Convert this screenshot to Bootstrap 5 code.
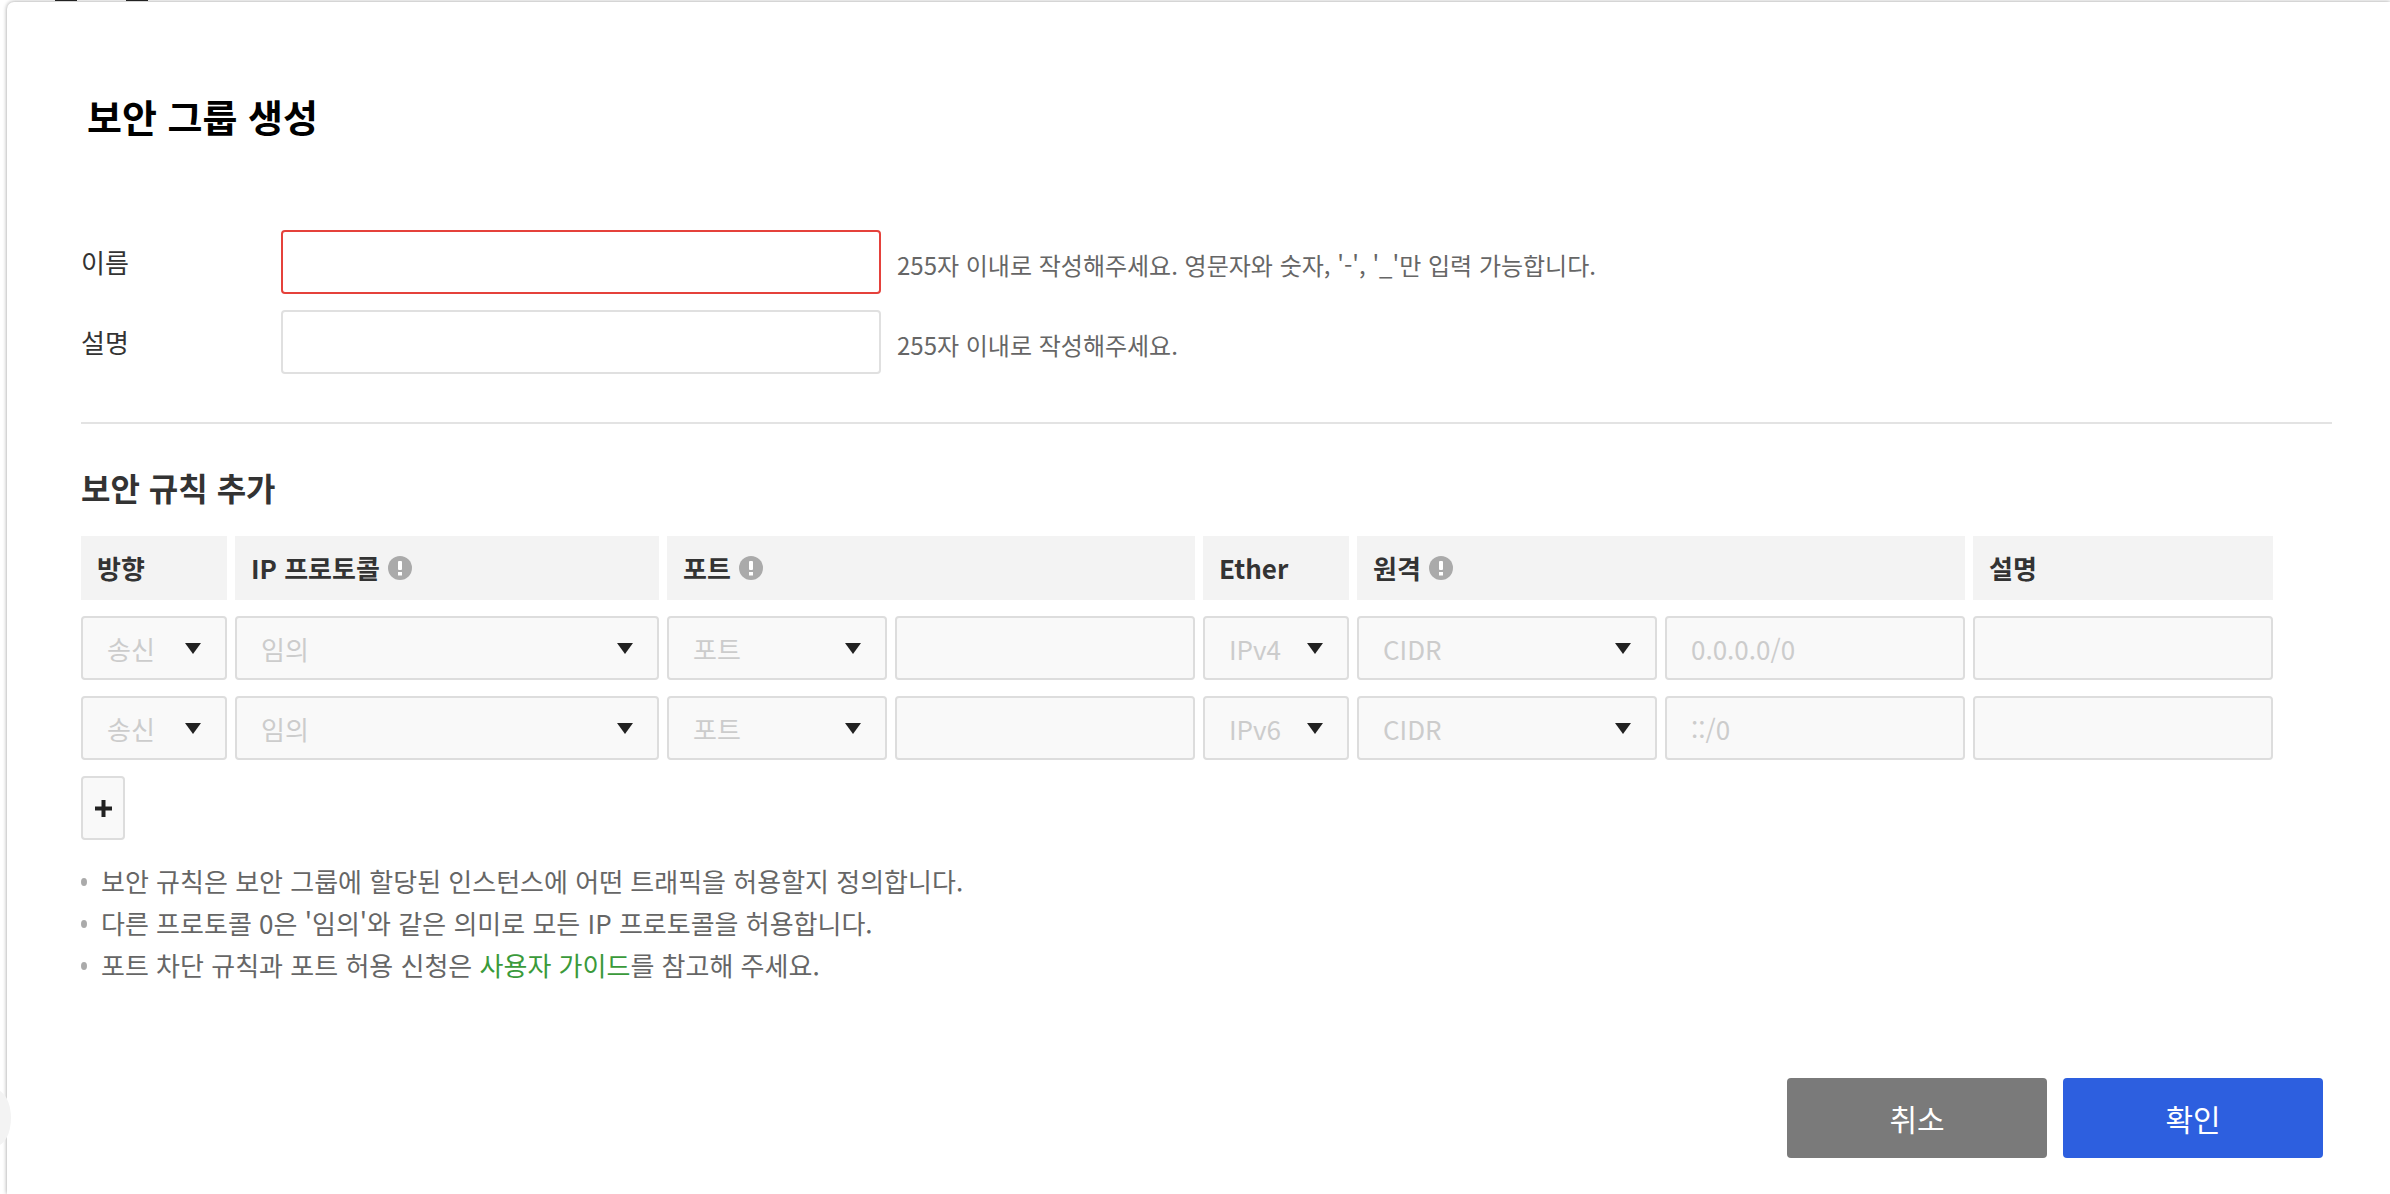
<!doctype html>
<html lang="ko">
<head>
<meta charset="utf-8">
<title>보안 그룹 생성</title>
<link href="https://cdn.jsdelivr.net/npm/bootstrap@5.3.0/dist/css/bootstrap.min.css" rel="stylesheet">
<style>
html,body{height:100%;overflow:hidden;background:#fff}
body{font-family:"Noto Sans CJK KR","Noto Sans",sans-serif;color:#333;position:relative}
.sheet{position:absolute;left:7px;top:2px;right:0;height:1192px;background:#fff;border-radius:7px 0 0 0;box-shadow:0 0 4px rgba(0,0,0,.4);padding:87px 58px 0 74px}
.notch{position:absolute;left:-26px;top:1088px;width:30px;height:56px;border-radius:50%;background:#f3f3f3}
.ttl{font-size:38px;font-weight:700;color:#000;margin:0;padding:0 0 0 6px;line-height:54px;height:52px}
.frm{padding-top:89px}
.frow{display:flex;align-items:center;height:64px;margin-bottom:16px}
.flabel{width:200px;font-size:26px;line-height:36px;color:#333;margin:0}
.finput{width:600px;height:64px;border:2px solid #e0e0e0;border-radius:4px;box-shadow:none}
.finput.bad{border-color:#e5413b}
.fhint{font-size:24px;color:#666;margin:6px 0 0 16px;line-height:36px}
.rule{border:0;border-top:2px solid #e3e3e3;opacity:1;margin:48px 0 0;width:2251px}
.subttl{font-size:32px;font-weight:700;color:#333;line-height:44px;margin:41px 0 27px}
.rgrid{display:grid;grid-template-columns:146px 424px 220px 300px 146px 300px 300px 300px;gap:16px 8px;width:2192px}
.hcell{background:#f3f3f3;height:64px;display:flex;align-items:center;gap:8px;padding:0 16px 2px;font-size:26px;font-weight:700;color:#333}
.hcell svg{flex:none;margin-top:2px}
.s2{grid-column:span 2}
.fld{height:64px;border:2px solid #ddd;border-radius:4px;background-color:#f9f9f9;color:#ccc;font-size:26px;padding:0 24px;box-shadow:none;opacity:1;font-family:inherit}
.fld:disabled{background-color:#f9f9f9;color:#ccc;opacity:1}
.fld::placeholder{color:#ccc;opacity:1}
.sel{--bs-form-select-bg-img:url("data:image/svg+xml,%3csvg xmlns='http://www.w3.org/2000/svg' viewBox='0 0 16 11'%3e%3cpath fill='%23222' d='M0 0h16L8 11z'/%3e%3c/svg%3e");background-position:right 24px center;background-size:16px 11px}
.addbtn{width:44px;height:64px;border:2px solid #ddd;border-radius:4px;background:#f9f9f9;color:#222;padding:0;margin-top:16px;display:flex;align-items:center;justify-content:center}
.notes{list-style:none;margin:20px 0 0;padding:0;font-size:26px;line-height:42px;color:#666}
.notes li{position:relative;padding-left:20px}
.notes li::before{content:"";position:absolute;left:0;top:18px;width:6px;height:8px;border-radius:50%;background:#aaa}
.notes a{color:#3a9a3a;text-decoration:none}
.acts{position:absolute;left:1780px;top:1076px;display:flex;gap:16px}
.bigbtn{width:260px;height:80px;border:0;border-radius:4px;color:#fff;font-size:30px;padding:0}
.bcancel,.bcancel:hover{background:#7a7a7a;color:#fff}
.bok,.bok:hover{background:#2d5fdf;color:#fff}
.scrap{position:absolute;top:0;height:1px;background:#222;z-index:2}
</style>
</head>
<body>
<div class="scrap" style="left:55px;width:22px"></div>
<div class="scrap" style="left:126px;width:22px"></div>
<div class="sheet">
  <div class="notch"></div>
  <h2 class="ttl">보안 그룹 생성</h2>
  <form class="frm">
    <div class="frow">
      <label class="flabel" for="nm">이름</label>
      <input id="nm" class="form-control finput bad" type="text">
      <span class="fhint">255자 이내로 작성해주세요. 영문자와 숫자, '-', '_'만 입력 가능합니다.</span>
    </div>
    <div class="frow mb-0">
      <label class="flabel" for="ds">설명</label>
      <input id="ds" class="form-control finput" type="text">
      <span class="fhint">255자 이내로 작성해주세요.</span>
    </div>
    <hr class="rule">
    <h3 class="subttl">보안 규칙 추가</h3>
    <div class="rgrid">
      <div class="hcell">방향</div>
      <div class="hcell">IP 프로토콜 <svg width="24" height="24" viewBox="0 0 24 24"><circle cx="12" cy="12" r="12" fill="#aaa"/><rect x="10" y="5" width="4" height="9" rx="1" fill="#fff"/><rect x="10" y="16" width="4" height="3.500" fill="#fff"/></svg></div>
      <div class="hcell s2">포트 <svg width="24" height="24" viewBox="0 0 24 24"><circle cx="12" cy="12" r="12" fill="#aaa"/><rect x="10" y="5" width="4" height="9" rx="1" fill="#fff"/><rect x="10" y="16" width="4" height="3.500" fill="#fff"/></svg></div>
      <div class="hcell">Ether</div>
      <div class="hcell s2">원격 <svg width="24" height="24" viewBox="0 0 24 24"><circle cx="12" cy="12" r="12" fill="#aaa"/><rect x="10" y="5" width="4" height="9" rx="1" fill="#fff"/><rect x="10" y="16" width="4" height="3.500" fill="#fff"/></svg></div>
      <div class="hcell">설명</div>

      <select class="form-select fld sel" disabled><option>송신</option></select>
      <select class="form-select fld sel" disabled><option>임의</option></select>
      <select class="form-select fld sel" disabled><option>포트</option></select>
      <input class="form-control fld" disabled>
      <select class="form-select fld sel" disabled><option>IPv4</option></select>
      <select class="form-select fld sel" disabled><option>CIDR</option></select>
      <input class="form-control fld" disabled placeholder="0.0.0.0/0">
      <input class="form-control fld" disabled>

      <select class="form-select fld sel" disabled><option>송신</option></select>
      <select class="form-select fld sel" disabled><option>임의</option></select>
      <select class="form-select fld sel" disabled><option>포트</option></select>
      <input class="form-control fld" disabled>
      <select class="form-select fld sel" disabled><option>IPv6</option></select>
      <select class="form-select fld sel" disabled><option>CIDR</option></select>
      <input class="form-control fld" disabled placeholder="::/0">
      <input class="form-control fld" disabled>
    </div>
    <button type="button" class="btn addbtn" aria-label="추가"><svg width="17" height="17" viewBox="0 0 17 17"><path fill="#222" d="M6.500 0h4v6.500H17v4h-6.500V17h-4v-6.500H0v-4h6.500z"/></svg></button>
    <ul class="notes">
      <li>보안 규칙은 보안 그룹에 할당된 인스턴스에 어떤 트래픽을 허용할지 정의합니다.</li>
      <li>다른 프로토콜 0은 '임의'와 같은 의미로 모든 IP 프로토콜을 허용합니다.</li>
      <li>포트 차단 규칙과 포트 허용 신청은 <a href="#">사용자 가이드</a>를 참고해 주세요.</li>
    </ul>
  </form>
  <div class="acts">
    <button type="button" class="btn bigbtn bcancel">취소</button>
    <button type="button" class="btn bigbtn bok">확인</button>
  </div>
</div>
</body>
</html>
